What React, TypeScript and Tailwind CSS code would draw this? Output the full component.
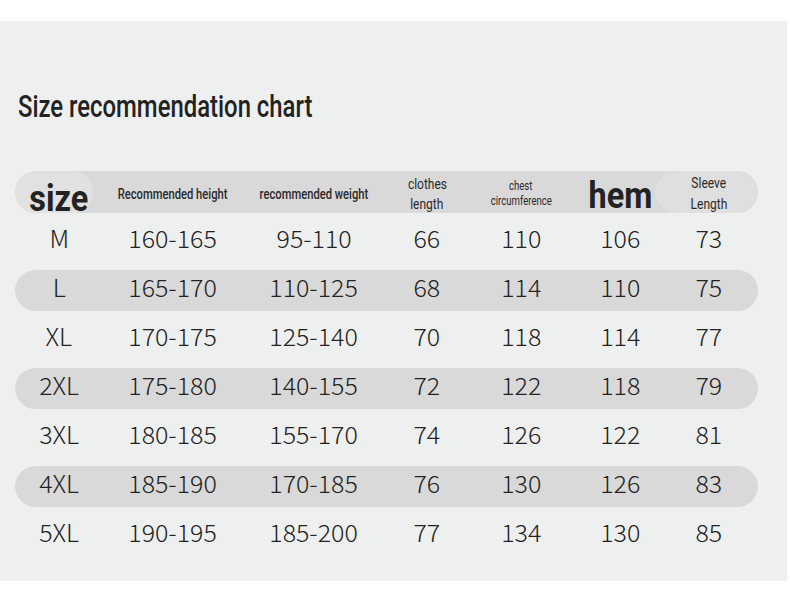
import React from "react";

const rows = [
  ["M", "160-165", "95-110", "66", "110", "106", "73"],
  ["L", "165-170", "110-125", "68", "114", "110", "75"],
  ["XL", "170-175", "125-140", "70", "118", "114", "77"],
  ["2XL", "175-180", "140-155", "72", "122", "118", "79"],
  ["3XL", "180-185", "155-170", "74", "126", "122", "81"],
  ["4XL", "185-190", "170-185", "76", "130", "126", "83"],
  ["5XL", "190-195", "185-200", "77", "134", "130", "85"],
];

const grid = "grid grid-cols-[88px_140px_142px_84px_104px_94px_84px] items-center";

function Cond({ children, className }: { children: React.ReactNode; className?: string }) {
  return (
    <span
      className={"inline-block origin-center scale-x-[0.8] whitespace-nowrap font-['Roboto',sans-serif] " + (className ?? "")}
    >
      {children}
    </span>
  );
}

export default function App() {
  return (
    <div className="w-[790px] h-[593px] bg-white pt-[21px]">
      <div className="w-[787px] h-[560px] bg-[#eeefef] flex flex-col">
        <div className="h-[150px] flex items-end pl-[18px] pb-[49px]">
          <span className="inline-block origin-left scale-x-[0.77] whitespace-nowrap font-['Roboto',sans-serif] text-[31px] leading-none font-medium text-[#222]">
            Size recommendation chart
          </span>
        </div>
        <div className="pl-[15px] flex flex-col gap-[8px]">
          <div className={"relative w-[743px] h-[42px] rounded-full bg-[#d9d9d9] " + grid}>
            <div className="absolute left-0 top-0 w-[78px] h-[42px] rounded-full bg-[#e1e1e1]" />
            <div className="absolute left-[640px] top-0 w-[103px] h-[42px] rounded-full bg-[#dfdfdf]" />
            <div className="relative flex justify-center pt-[10px]">
              <Cond className="text-[36px] font-bold leading-none text-[#222] scale-x-[0.9]">size</Cond>
            </div>
            <div className="relative flex justify-center">
              <Cond className="text-[14px] font-medium leading-none text-[#2a2a2a]">Recommended height</Cond>
            </div>
            <div className="relative flex justify-center">
              <Cond className="text-[14px] font-medium leading-none text-[#2a2a2a]">recommended weight</Cond>
            </div>
            <div className="relative flex flex-col items-center leading-[20px] text-[15px] text-[#2a2a2a]">
              <Cond>clothes</Cond>
              <Cond>length</Cond>
            </div>
            <div className="relative flex flex-col items-center leading-[15px] text-[12px] text-[#2a2a2a]">
              <Cond>chest</Cond>
              <Cond>circumference</Cond>
            </div>
            <div className="relative flex justify-center pt-[4px]">
              <Cond className="text-[36px] font-bold leading-none text-[#222] scale-x-[0.9]">hem</Cond>
            </div>
            <div className="relative flex flex-col items-center leading-[21px] text-[15px] text-[#2a2a2a]">
              <Cond>Sleeve</Cond>
              <Cond>Length</Cond>
            </div>
          </div>
          {rows.map((r, i) => (
            <div
              key={r[0]}
              className={
                "w-[743px] h-[41px] rounded-full " +
                (i % 2 === 1 ? "bg-[#d9d9d9] " : "") +
                grid
              }
            >
              {r.map((c, j) => (
                <div
                  key={j}
                  className="flex justify-center pb-[7px] font-['Noto_Sans_CJK_SC','Noto_Sans',sans-serif] font-light text-[24px] leading-none text-[#222]"
                >
                  <span className="inline-block scale-x-[1.04]">{c}</span>
                </div>
              ))}
            </div>
          ))}
        </div>
      </div>
    </div>
  );
}
